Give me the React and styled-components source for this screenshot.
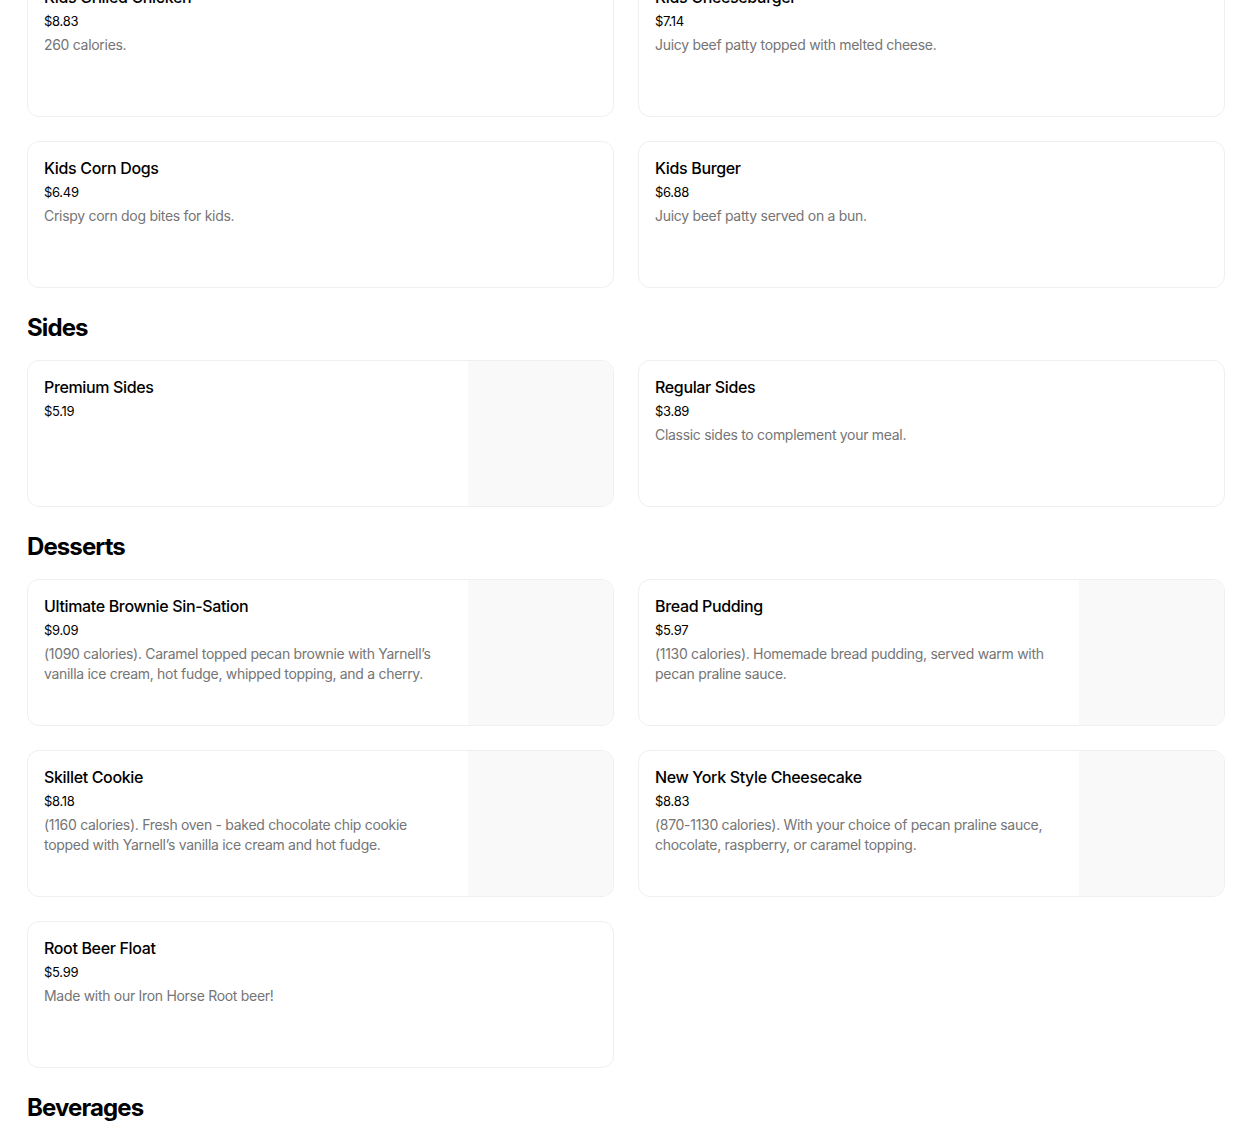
import React from "react";
import styled, { createGlobalStyle } from "styled-components";

const GlobalStyle = createGlobalStyle`
  html, body {
    margin: 0;
    padding: 0;
    background: #fff;
    overflow: hidden;
  }
  body {
    font-family: Inter, "Open Sans", "Liberation Sans", sans-serif;
    color: #000;
  }
  * {
    box-sizing: border-box;
  }
`;

const Page = styled.div`
  padding: 0 25px 0 27px;
  margin-top: -30px;
`;

const Section = styled.section`
  display: flex;
  flex-flow: column;
`;

const SectionTitle = styled.h2`
  margin: 24px 0 16px;
  font-size: 24px;
  line-height: 32px;
  font-weight: 700;
  letter-spacing: -0.9px;
`;

const Grid = styled.div`
  display: grid;
  grid-template-columns: 1fr 1fr;
  column-gap: 24px;
  row-gap: 24px;
`;

const Card = styled.div`
  display: flex;
  height: 147px;
  border: 1px solid #efefef;
  border-radius: 12px;
  overflow: hidden;
  background: #fff;
`;

const Info = styled.div`
  flex: 1;
  padding: 16px;
  display: flex;
  flex-flow: column;
  gap: 4px;
`;

const Name = styled.div`
  font-size: 16px;
  line-height: 20px;
  font-weight: 500;
  letter-spacing: -0.35px;
`;

const Price = styled.div`
  font-size: 13px;
  line-height: 20px;
  letter-spacing: -0.3px;
`;

const Desc = styled.div`
  font-size: 14px;
  line-height: 20px;
  color: #757575;
  letter-spacing: -0.3px;
`;

const Thumb = styled.div`
  flex: 0 0 145px;
  background: #f9f9f9;
`;

const sections = [
  {
    title: null,
    items: [
      { name: "Kids Grilled Chicken", price: "$8.83", desc: "260 calories." },
      { name: "Kids Cheeseburger", price: "$7.14", desc: "Juicy beef patty topped with melted cheese." },
      { name: "Kids Corn Dogs", price: "$6.49", desc: "Crispy corn dog bites for kids." },
      { name: "Kids Burger", price: "$6.88", desc: "Juicy beef patty served on a bun." },
    ],
  },
  {
    title: "Sides",
    items: [
      { name: "Premium Sides", price: "$5.19", img: true },
      { name: "Regular Sides", price: "$3.89", desc: "Classic sides to complement your meal." },
    ],
  },
  {
    title: "Desserts",
    items: [
      {
        name: "Ultimate Brownie Sin-Sation",
        price: "$9.09",
        desc: "(1090 calories). Caramel topped pecan brownie with Yarnell’s vanilla ice cream, hot fudge, whipped topping, and a cherry.",
        img: true,
      },
      {
        name: "Bread Pudding",
        price: "$5.97",
        desc: "(1130 calories). Homemade bread pudding, served warm with pecan praline sauce.",
        img: true,
      },
      {
        name: "Skillet Cookie",
        price: "$8.18",
        desc: "(1160 calories). Fresh oven - baked chocolate chip cookie topped with Yarnell’s vanilla ice cream and hot fudge.",
        img: true,
      },
      {
        name: "New York Style Cheesecake",
        price: "$8.83",
        desc: "(870-1130 calories). With your choice of pecan praline sauce, chocolate, raspberry, or caramel topping.",
        img: true,
      },
      { name: "Root Beer Float", price: "$5.99", desc: "Made with our Iron Horse Root beer!" },
    ],
  },
  { title: "Beverages", items: [] },
];

const MenuCard = ({ item }) => (
  <Card>
    <Info>
      <Name>{item.name}</Name>
      <Price>{item.price}</Price>
      {item.desc && <Desc>{item.desc}</Desc>}
    </Info>
    {item.img && <Thumb />}
  </Card>
);

export default function App() {
  return (
    <>
      <GlobalStyle />
      <Page>
        {sections.map((s, i) => (
          <Section key={i}>
            {s.title && <SectionTitle>{s.title}</SectionTitle>}
            {s.items.length > 0 && (
              <Grid>
                {s.items.map((item) => (
                  <MenuCard key={item.name} item={item} />
                ))}
              </Grid>
            )}
          </Section>
        ))}
      </Page>
    </>
  );
}
